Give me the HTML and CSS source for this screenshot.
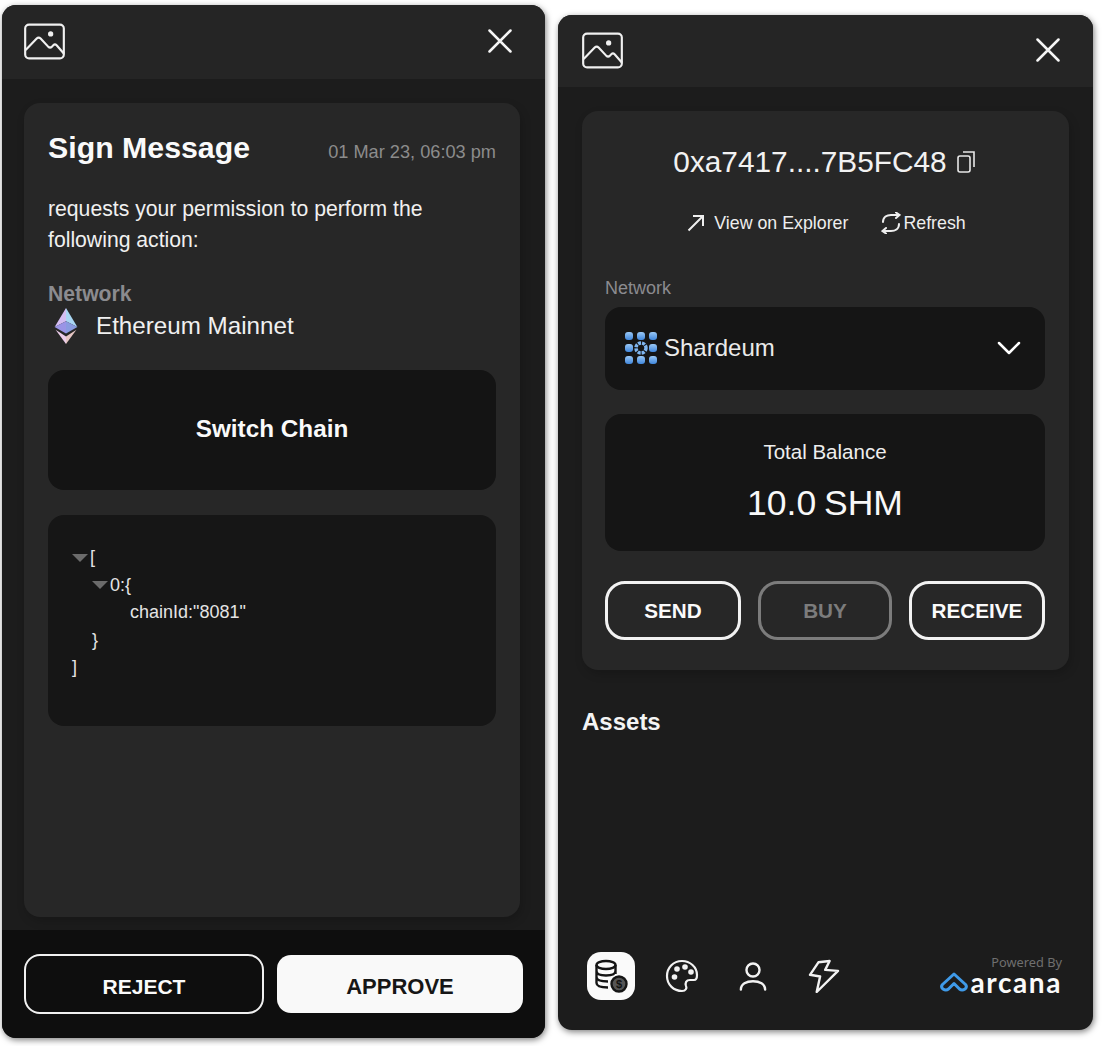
FILE: index.html
```html
<!DOCTYPE html>
<html lang="en">
<head>
<meta charset="utf-8">
<title>Arcana wallet</title>
<link rel="stylesheet" href="styles.css">
</head>
<body>
<div class="stage">
  <section class="panel panel-sign">
    <header class="bar bar-sign">
      <svg class="logo" viewBox="0 0 42 37" fill="none" stroke="#f0f0f0" stroke-width="2.200" stroke-linejoin="round"><rect x="1.200" y="1.200" width="39.600" height="34.600" rx="4"/><path d="M1.700 27.300 L13 15.500 Q15 13.500 17 15.500 L25 24 Q26.700 25.700 28.400 24 L30 22.300 Q31.700 20.700 33.400 22.300 L41 31"/><circle cx="27.300" cy="10.700" r="2.700" fill="#f0f0f0" stroke="none"/></svg>
      <svg class="close" viewBox="0 0 24 24" fill="none" stroke="#f5f5f5" stroke-width="2.500" stroke-linecap="round"><path d="M1.500 1.500 L22.500 22.500 M22.500 1.500 L1.500 22.500"/></svg>
    </header>
    <main class="sign-body">
      <div class="card sign-card">
        <div class="sign-head">
          <h1 class="sign-title">Sign Message</h1>
          <span class="sign-date">01 Mar 23, 06:03 pm</span>
        </div>
        <p class="sign-text">requests your permission to perform the following action:</p>
        <div class="net-label">Network</div>
        <div class="net-row">
          <svg class="eth" viewBox="0 0 24 38"><path d="M12 0 L0 20 L12 14z" fill="#d4bdf2"/><path d="M12 0 L24 20 L12 14z" fill="#a9d6f3"/><path d="M0 20 L12 14 L12 27z" fill="#9a94e6"/><path d="M24 20 L12 14 L12 27z" fill="#8a9be0"/><path d="M1 23 L12 30 L12 38z" fill="#eccdea"/><path d="M23 23 L12 30 L12 38z" fill="#e6c6c4"/></svg>
          <span>Ethereum Mainnet</span>
        </div>
        <div class="switch-box">Switch Chain</div>
        <div class="json-box">
          <div class="json-line"><i class="caret"></i>[</div>
          <div class="json-line json-in1"><i class="caret"></i>0:{</div>
          <div class="json-line json-in2">chainId:"8081"</div>
          <div class="json-line json-in3">}</div>
          <div class="json-line">]</div>
        </div>
      </div>
    </main>
    <footer class="sign-foot">
      <button class="btn btn-reject">REJECT</button>
      <button class="btn btn-approve">APPROVE</button>
    </footer>
  </section>

  <section class="panel panel-wallet">
    <header class="bar bar-wallet">
      <svg class="logo" viewBox="0 0 42 37" fill="none" stroke="#f0f0f0" stroke-width="2.200" stroke-linejoin="round"><rect x="1.200" y="1.200" width="39.600" height="34.600" rx="4"/><path d="M1.700 27.300 L13 15.500 Q15 13.500 17 15.500 L25 24 Q26.700 25.700 28.400 24 L30 22.300 Q31.700 20.700 33.400 22.300 L41 31"/><circle cx="27.300" cy="10.700" r="2.700" fill="#f0f0f0" stroke="none"/></svg>
      <svg class="close" viewBox="0 0 24 24" fill="none" stroke="#f5f5f5" stroke-width="2.500" stroke-linecap="round"><path d="M1.500 1.500 L22.500 22.500 M22.500 1.500 L1.500 22.500"/></svg>
    </header>
    <main class="wallet-body">
      <div class="card wallet-card">
        <div class="addr">
          <span>0xa7417....7B5FC48</span>
          <svg class="copy" viewBox="0 0 18 22" fill="none" stroke="#e8e8e8" stroke-width="1.600"><rect x="1" y="5" width="12" height="16" rx="2"/><path d="M6 1 H17 V16"/></svg>
        </div>
        <div class="links">
          <span class="link link-explorer">
            <svg class="arrow" viewBox="0 0 18 18" fill="none" stroke="#eee" stroke-width="2"><path d="M1.500 16.500 L16 2 M6 2 H16 V12"/></svg>View on Explorer</span>
          <span class="link">
            <svg class="refresh" viewBox="0 0 20 22" fill="none" stroke="#eee" stroke-width="2" stroke-linecap="round"><path d="M2 10 C2 5 6 3 10 3 H18 M15 0.500 L18.500 3 L15 6 M18 12 C18 17 14 19 10 19 H2 M5 16 L1.500 19 L5 21.500"/></svg>Refresh</span>
        </div>
        <div class="wallet-label">Network</div>
        <div class="select">
          <div class="select-main">
            <svg class="shard" viewBox="0 0 34 34"><defs><linearGradient id="cube" x1="0" y1="0" x2="0" y2="1"><stop offset="0" stop-color="#9ac8f5"/><stop offset="1" stop-color="#3f86dc"/></linearGradient></defs><g fill="url(#cube)"><rect x="1" y="1" width="8" height="8" rx="3"/><rect x="13" y="1" width="8" height="8" rx="3"/><rect x="25" y="1" width="8" height="8" rx="3"/><rect x="1" y="13" width="8" height="8" rx="3"/><rect x="25" y="13" width="8" height="8" rx="3"/><rect x="1" y="25" width="8" height="8" rx="3"/><rect x="13" y="25" width="8" height="8" rx="3"/><rect x="25" y="25" width="8" height="8" rx="3"/></g><circle cx="17" cy="17" r="5" fill="none" stroke="#7fb6f0" stroke-width="3.500" stroke-dasharray="3 1"/></svg>
            <span>Shardeum</span>
          </div>
          <svg class="chev" viewBox="0 0 24 14" fill="none" stroke="#fff" stroke-width="2.500" stroke-linecap="round" stroke-linejoin="round"><path d="M2 2 L12 12 L22 2"/></svg>
        </div>
        <div class="balance">
          <div class="balance-label">Total Balance</div>
          <div class="balance-value">10.0 SHM</div>
        </div>
        <div class="actions">
          <button class="btn btn-action">SEND</button>
          <button class="btn btn-action btn-off">BUY</button>
          <button class="btn btn-action">RECEIVE</button>
        </div>
      </div>
      <h2 class="assets">Assets</h2>
    </main>
    <footer class="wallet-foot">
      <nav class="tabs">
        <span class="tab tab-on">
          <svg viewBox="0 0 34 34" class="tab-icon" fill="none" stroke="#151515" stroke-width="2.400"><ellipse cx="12" cy="6" rx="9.500" ry="4"/><path d="M2.500 6 V24 C2.500 27 7 28.500 14 28.500 M21.500 6 V15 M2.500 12 C2.500 15 7 16.500 12 16.500 S21.500 15 21.500 12 M2.500 18 C2.500 21 7 22.500 14 22.500"/><circle cx="25" cy="25" r="7.500" fill="#555" stroke="#151515"/><text class="coin-mark" x="25" y="29" text-anchor="middle">$</text></svg>
        </span>
        <span class="tab">
          <svg viewBox="0 0 34 34" class="tab-icon" fill="none" stroke="#f2f2f2" stroke-width="2.200"><path d="M17 2 C8 2 2 9 2 17 C2 26 9 32 17 32 C21 32 22 29 21 27 C20 24 21 21 25 21 H29 C31 21 32 19 32 16 C32 8 25 2 17 2 Z"/><g fill="#f2f2f2" stroke="none"><circle cx="9.500" cy="18" r="2.800"/><circle cx="12" cy="10" r="2.800"/><circle cx="20" cy="8" r="2.800"/><circle cx="26" cy="13" r="2.800"/></g></svg>
        </span>
        <span class="tab">
          <svg viewBox="0 0 30 32" class="tab-icon tab-person" fill="none" stroke="#f2f2f2" stroke-width="2.600" stroke-linecap="round"><circle cx="15" cy="9" r="7"/><path d="M2 30 C2 24 8 21 15 21 S28 24 28 30"/></svg>
        </span>
        <span class="tab">
          <svg viewBox="0 0 30 34" class="tab-icon tab-bolt" fill="none" stroke="#f2f2f2" stroke-width="2.400" stroke-linejoin="round"><path d="M9.400 3.300 L20.600 2 L16.200 10.900 L29 11.900 L7.700 33 L11.100 17.500 L1 15.800 Z"/></svg>
        </span>
      </nav>
      <div class="brand">
        <div class="brand-by">Powered By</div>
        <div class="brand-row">
          <svg class="brand-mark" viewBox="0 0 28 20" fill="none" stroke="#3f9ae8" stroke-width="3" stroke-linejoin="round" stroke-linecap="round"><path d="M14 2 L2.500 12.500 Q0.500 15 3 17 Q6 19 8.500 17 L14 11.500 L19.500 17 Q22 19 25 17 Q27.500 15 25.500 12.500 Z"/></svg>
          <span class="brand-name">arcana</span>
        </div>
      </div>
    </footer>
  </section>
</div>
</body>
</html>
```

FILE: styles.css
```css
* { box-sizing: border-box; }
html, body { margin: 0; padding: 0; background: #fff; }
body { font-family: "Liberation Sans", Arial, sans-serif; color: #f4f4f4; }
.stage { display: flex; align-items: flex-start; gap: 13px; padding: 5px 0 0 2px; width: 1102px; height: 1046px; overflow: hidden; }
.panel { display: flex; flex-direction: column; background: #1c1c1c; border-radius: 14px; overflow: hidden; flex: none; box-shadow: 1px 2px 6px rgba(0,0,0,.5); }
.panel-sign { width: 543px; height: 1033px; }
.panel-wallet { width: 535px; height: 1015px; margin-top: 10px; }
.bar { display: flex; align-items: center; justify-content: space-between; background: #252525; flex: none; }
.bar-sign { height: 74px; padding: 0 33px 2px 22px; }
.bar-wallet { height: 72px; padding: 0 33px 2px 24px; }
.logo { width: 41px; height: 37px; display: block; }
.close { width: 24px; height: 24px; display: block; }
.card { background: #272727; border-radius: 16px; box-shadow: 2px 4px 10px rgba(0,0,0,.18); }

.sign-body { flex: 1; padding: 24px 25px 13px 22px; display: flex; min-height: 0; }
.sign-card { flex: 1; padding: 24px; display: flex; flex-direction: column; }
.sign-head { display: flex; align-items: baseline; justify-content: space-between; height: 42px; }
.sign-title { margin: 0; font-size: 30.300px; font-weight: 700; color: #fafafa; line-height: 42px; }
.sign-date { font-size: 18.200px; color: #8c8c8c; }
.sign-text { margin: 24px 0 0; font-size: 21.200px; line-height: 31px; color: #f0f0f0; }
.net-label { margin-top: 26px; font-size: 21.200px; font-weight: 700; color: #8b8b8f; line-height: 26px; }
.net-row { display: flex; align-items: center; gap: 18px; margin: 1px 0 0 6px; font-size: 24.200px; line-height: 34px; color: #f0f0f0; }
.eth { width: 24px; height: 36px; display: block; }
.switch-box { margin-top: 26px; height: 120px; padding-bottom: 2px; border-radius: 16px; background: #141414; display: flex; align-items: center; justify-content: center; font-size: 24.300px; font-weight: 700; color: #fafafa; }
.json-box { margin-top: 25px; height: 211px; border-radius: 16px; background: #161616; padding: 29px 24px; font-size: 18px; color: #e4e4e4; }
.json-line { height: 27.500px; line-height: 27.500px; display: flex; align-items: center; }
.json-in1 { padding-left: 20px; }
.json-in2 { padding-left: 58px; }
.json-in3 { padding-left: 20px; }
.caret { width: 0; height: 0; border-left: 8px solid transparent; border-right: 8px solid transparent; border-top: 8px solid #6b6b6b; margin-right: 2px; flex: none; }

.sign-foot { flex: none; height: 108px; background: #0e0e0e; display: flex; align-items: center; gap: 13px; padding: 0 22px; }
.btn { font-family: inherit; font-weight: 700; display: flex; align-items: center; justify-content: center; padding: 0; }
.btn-reject { width: 240px; height: 60px; border-radius: 16px; border: 2px solid #f0f0f0; background: transparent; color: #fafafa; font-size: 21px; padding-top: 6px; }
.btn-approve { width: 246px; height: 58px; border-radius: 14px; border: 0; background: #f9f9f9; color: #161616; font-size: 22px; padding-top: 6px; }

.wallet-body { flex: 1; padding: 24px 24px 0; min-height: 0; }
.wallet-card { height: 559px; padding: 0 24px 0 23px; display: flex; flex-direction: column; }
.addr { display: flex; align-items: center; justify-content: center; gap: 10px; height: 44px; margin-top: 29px; padding-right: 2px; font-size: 29.800px; color: #f2f2f2; }
.copy { width: 18px; height: 22px; display: block; }
.links { display: flex; justify-content: center; gap: 33px; margin-top: 24px; height: 30px; padding-left: 3px; font-size: 17.800px; color: #eee; }
.link { display: flex; align-items: center; }
.arrow { width: 18px; height: 18px; margin-right: 9px; display: block; }
.refresh { width: 20px; height: 22px; margin-right: 2px; display: block; }
.wallet-label { margin-top: 39px; font-size: 18px; line-height: 22px; color: #8b8b8f; }
.select { margin-top: 8px; height: 83px; border-radius: 16px; background: #151515; display: flex; align-items: center; justify-content: space-between; padding: 0 24px 2px 19px; font-size: 24px; color: #eaeaea; }
.select-main { display: flex; align-items: center; gap: 6px; }
.shard { width: 34px; height: 34px; display: block; }
.chev { width: 24px; height: 14px; display: block; }
.balance { margin-top: 24px; height: 137px; border-radius: 16px; background: #151515; display: flex; flex-direction: column; align-items: center; padding-top: 25px; }
.balance-label { font-size: 20.500px; line-height: 26px; color: #eee; }
.balance-value { margin-top: 16px; font-size: 35.500px; line-height: 44px; word-spacing: -2px; color: #f8f8f8; }
.actions { margin-top: 30px; display: flex; justify-content: space-between; }
.btn-action { width: 136px; height: 59px; border-radius: 20px; border: 3px solid #f2f2f2; background: transparent; color: #fafafa; font-size: 20.700px; }
.btn-off { border-color: #7c7c7c; color: #7c7c7c; width: 134px; }
.assets { margin: 37px 0 0; font-size: 24px; line-height: 30px; font-weight: 700; color: #f4f4f4; }

.wallet-foot { flex: none; height: 102px; display: flex; align-items: flex-end; justify-content: space-between; padding: 0 31px 30px 29px; }
.tabs { display: flex; align-items: center; gap: 23px; }
.tab { width: 48px; height: 48px; border-radius: 14px; display: flex; align-items: center; justify-content: center; }
.tab-on { background: #fafafa; }
.tab-icon { width: 34px; height: 34px; display: block; }
.tab-person { width: 28px; height: 31px; }
.coin-mark { font-family: "Liberation Sans", sans-serif; font-size: 11px; font-weight: 700; fill: #111; stroke: none; }
.brand { display: flex; flex-direction: column; align-items: flex-end; margin-bottom: 8px; }
.brand-by { font-family: "Noto Sans", sans-serif; font-size: 12.800px; line-height: 16px; color: #6f6f6f; }
.brand-row { display: flex; align-items: center; gap: 2px; margin-top: 2px; }
.brand-mark { width: 28px; height: 20px; display: block; }
.brand-name { display: block; font-family: "Lato", sans-serif; font-size: 28px; line-height: 20px; height: 20px; font-weight: 700; letter-spacing: 1.600px; color: #fafafa; }
```
